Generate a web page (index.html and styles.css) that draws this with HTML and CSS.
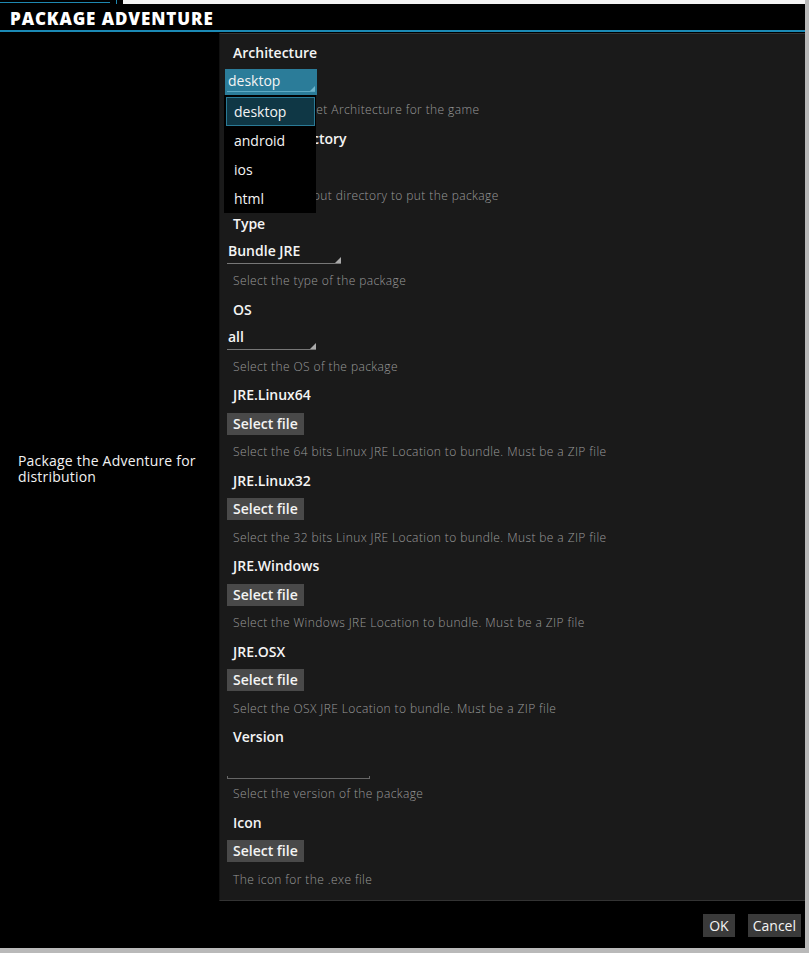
FILE: index.html
```html
<!DOCTYPE html>
<html>
<head>
<meta charset="utf-8">
<link rel="stylesheet" href="styles.css">
</head>
<body>
<div class="window">
  <div class="topstrip">
    <div class="topstrip-left"><span class="topline"></span><span class="toptick"></span></div>
    <div class="topstrip-right"></div>
  </div>
  <div class="titlebar"><h1 class="title">PACKAGE ADVENTURE</h1></div>
  <div class="main">
    <div class="side"><p class="side-label">Package the Adventure for distribution</p></div>
    <div class="panel">
      <div class="field">
        <div class="label">Architecture</div>
        <div class="control">
          <div class="select select-open"><span>desktop</span><i class="tri"></i></div>
        </div>
        <div class="desc">Select the target Architecture for the game</div>
      </div>
      <div class="field">
        <div class="label">Output directory</div>
        <div class="control"><button class="btn">Select file</button></div>
        <div class="desc">Select the output directory to put the package</div>
      </div>
      <div class="field">
        <div class="label">Type</div>
        <div class="control"><div class="select select-wide"><span>Bundle JRE</span><i class="tri"></i></div></div>
        <div class="desc">Select the type of the package</div>
      </div>
      <div class="field">
        <div class="label">OS</div>
        <div class="control"><div class="select"><span>all</span><i class="tri"></i></div></div>
        <div class="desc">Select the OS of the package</div>
      </div>
      <div class="field">
        <div class="label">JRE.Linux64</div>
        <div class="control"><button class="btn">Select file</button></div>
        <div class="desc">Select the 64 bits Linux JRE Location to bundle. Must be a ZIP file</div>
      </div>
      <div class="field">
        <div class="label">JRE.Linux32</div>
        <div class="control"><button class="btn">Select file</button></div>
        <div class="desc">Select the 32 bits Linux JRE Location to bundle. Must be a ZIP file</div>
      </div>
      <div class="field">
        <div class="label">JRE.Windows</div>
        <div class="control"><button class="btn">Select file</button></div>
        <div class="desc">Select the Windows JRE Location to bundle. Must be a ZIP file</div>
      </div>
      <div class="field">
        <div class="label">JRE.OSX</div>
        <div class="control"><button class="btn">Select file</button></div>
        <div class="desc">Select the OSX JRE Location to bundle. Must be a ZIP file</div>
      </div>
      <div class="field">
        <div class="label">Version</div>
        <div class="control"><div class="textfield"></div></div>
        <div class="desc">Select the version of the package</div>
      </div>
      <div class="field">
        <div class="label">Icon</div>
        <div class="control"><button class="btn">Select file</button></div>
        <div class="desc">The icon for the .exe file</div>
      </div>
      <ul class="dropdown">
        <li class="item item-active">desktop</li>
        <li class="item">android</li>
        <li class="item">ios</li>
        <li class="item">html</li>
      </ul>
    </div>
  </div>
  <div class="footer">
    <button class="btn btn-foot">OK</button>
    <button class="btn btn-foot btn-cancel">Cancel</button>
  </div>
</div>
</body>
</html>
```

FILE: styles.css
```css
html, body {
  margin: 0;
  padding: 0;
}
body {
  background: #b9b9b9;
  width: 809px;
  height: 953px;
  overflow: hidden;
  font-family: "Open Sans", "DejaVu Sans", sans-serif;
}
.window {
  width: 805px;
  height: 948px;
  background: #000;
  display: flex;
  flex-direction: column;
}
.topstrip {
  height: 4px;
  display: flex;
}
.topstrip-left {
  width: 123px;
  background: #000;
  position: relative;
}
.topline {
  position: absolute;
  left: 0;
  top: 2px;
  width: 110px;
  height: 1px;
  background: #1e87b0;
}
.toptick {
  position: absolute;
  left: 116px;
  top: 0;
  width: 1px;
  height: 4px;
  background: #1e87b0;
}
.topstrip-right {
  flex: 1;
  background: #f4f4f4;
}
.titlebar {
  height: 26px;
  border-bottom: 2px solid #1b8ab5;
  display: flex;
  align-items: center;
  padding-left: 10px;
}
.title {
  margin: 2px 0 0;
  font-family: "Open Sans", "DejaVu Sans", sans-serif;
  font-weight: 800;
  font-size: 17px;
  letter-spacing: 0.9px;
  color: #fff;
}
.main {
  display: flex;
  margin-top: 1px;
  height: 868px;
}
.side {
  width: 219px;
  display: flex;
  align-items: center;
}
.side-label {
  margin: 4px 0 0 18px;
  width: 198px;
  color: #f2f2f2;
  font-size: 14px;
  line-height: 16px;
  letter-spacing: 0.2px;
}
.panel {
  flex: 1;
  background: #1a1a1a;
  border-top: 1px solid #333;
  border-bottom: 1px solid #333;
  border-left: 1px solid #111;
  padding-top: 5px;
  position: relative;
}
.field {
  display: flex;
  flex-direction: column;
}
.label {
  height: 28px;
  line-height: 28px;
  padding-left: 13px;
  color: #f4f4f4;
  font-size: 14px;
  font-weight: 600;
}
.control {
  height: 29px;
  display: flex;
  align-items: center;
  padding-left: 7px;
}
.desc {
  height: 28.5px;
  line-height: 28.5px;
  padding-left: 13px;
  color: #9a9a9a;
  font-size: 12px;
  font-weight: 300;
  letter-spacing: 0.4px;
}
.select {
  position: relative;
  width: 88px;
  height: 22px;
  line-height: 20px;
  color: #f4f4f4;
  font-size: 14px;
  font-weight: 600;
  padding-left: 1px;
  border-bottom: 1px solid #777;
}
.select-wide {
  width: 113px;
}
.tri {
  position: absolute;
  right: 0;
  bottom: 0;
  width: 0;
  height: 0;
  border-left: 6px solid transparent;
  border-bottom: 6px solid #aaa;
}
.select-open {
  margin-left: -2px;
  width: 88px;
  height: 22px;
  padding: 2px 1px 2px 3px;
  background: #2b7c99;
  border-bottom: none;
  font-weight: 500;
}
.select-open::after {
  content: "";
  position: absolute;
  left: 2px;
  right: 2px;
  bottom: 3px;
  height: 1px;
  background: #5ea9c3;
}
.select-open .tri {
  right: 2px;
  bottom: 3px;
  border-bottom-color: #6cb4cc;
}
.btn {
  font-family: "Open Sans", "DejaVu Sans", sans-serif;
  background: #494949;
  color: #f4f4f4;
  border: none;
  font-size: 14px;
  font-weight: 600;
  height: 22px;
  padding: 0 6px;
  line-height: 22px;
}
.textfield {
  width: 143px;
  height: 22px;
  margin-top: 5px;
  border-bottom: 1px solid #666;
  border-left: 1px solid #444;
  border-right: 1px solid #444;
  box-sizing: border-box;
  border-image: linear-gradient(to bottom, transparent 85%, #666 85%) 1;
}
.dropdown {
  position: absolute;
  left: 4px;
  top: 61px;
  width: 92px;
  height: 118px;
  margin: 0;
  padding: 2px 0 0;
  list-style: none;
  background: #000;
  box-sizing: border-box;
}
.item {
  height: 29px;
  line-height: 29px;
  padding-left: 10px;
  color: #f4f4f4;
  font-size: 14px;
  font-weight: 500;
}
.item-active {
  margin: 0 1px 0 2px;
  padding-left: 7px;
  height: 27px;
  line-height: 27px;
  background: #0f3745;
  border: 1px solid #2a7a96;
}
.footer {
  flex: 1;
  display: flex;
  justify-content: flex-end;
  align-items: center;
  gap: 13px;
  padding-right: 4px;
  padding-top: 2px;
}
.btn-foot {
  height: 23px;
  padding: 0 6px;
  background: #3a3a3a;
  font-weight: 500;
}
.btn-cancel {
  padding: 0 5px;
}
```
